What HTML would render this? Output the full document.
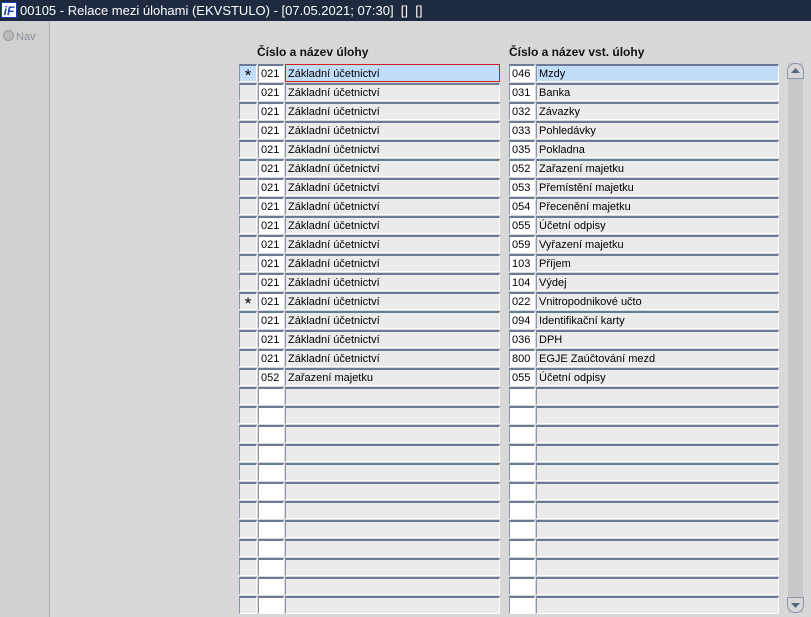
<!DOCTYPE html><html><head><meta charset="utf-8"><style>
body{margin:0;width:811px;height:617px;background:#d8d8d8;font-family:"Liberation Sans",sans-serif;position:relative;overflow:hidden}
#t{position:absolute;left:0;top:0;width:811px;height:21px;background:#1e2a40;color:#fff;font-size:13px;line-height:21px}
#t .lg{position:absolute;left:1px;top:2px;width:16px;height:16px;background:#fff;color:#1a3fb0;font-weight:bold;font-style:italic;font-size:12px;line-height:16px;text-align:center;border:1px solid #1a3fb0;box-sizing:border-box}
#t span.tx{position:absolute;left:20px}
#lp{position:absolute;left:0;top:21px;width:49px;height:596px;background:#d0d0d0;border-right:1px solid #aeb2b8}
#nav{position:absolute;left:3px;top:9px;font-size:11px;color:#8890a0}
#nav i{display:inline-block;width:9px;height:9px;border-radius:50%;background:#bbb;border:1px solid #999;vertical-align:-1px;margin-right:2px}
.h{position:absolute;top:45px;font-size:12px;font-weight:bold;color:#111}
.f{position:absolute;height:18px;box-sizing:border-box;border-top:2px solid #6b7b95;border-left:1px solid #8a97ab;border-right:1px solid #fff;border-bottom:1px solid #fff;background:#ebebeb;font-size:11px;line-height:15px;padding-left:2px;padding-top:1px;color:#000;white-space:nowrap;overflow:hidden}
.w{background:#fff}
.sel{background:#c1ddf9}
.ind{text-align:center;padding:0;font-size:17px;line-height:20px}
#sb{position:absolute;left:788px;top:63px;width:15px;height:550px;background:#c9c9c9}
.ar{position:absolute;left:787px;width:17px;height:16px;background:#d8d8d8;border:1px solid #8a97ab;box-sizing:border-box}
</style></head><body>
<div id="t"><div class="lg">iF</div><span class="tx">00105 - Relace mezi úlohami (EKVSTULO) - [07.05.2021; 07:30] &nbsp;[] &nbsp;[]</span></div>
<div id="lp"><div id="nav"><i></i>Nav</div></div>
<div class="h" style="left:257px">Číslo a název úlohy</div>
<div class="h" style="left:509px">Číslo a název vst. úlohy</div>
<div id="sb"></div>
<div class="ar" style="top:63px;border-radius:8px 8px 0 0"><svg width="15" height="14"><path d="M3 9h9L7.5 4z" fill="#5a6a85"/></svg></div>
<div class="ar" style="top:597px;border-radius:0 0 8px 8px"><svg width="15" height="14"><path d="M3 5h9L7.5 10z" fill="#5a6a85"/></svg></div>
<div id="rows"></div>
<script>
var d=[["*","046","Mzdy"],["","031","Banka"],["","032","Závazky"],["","033","Pohledávky"],["","035","Pokladna"],["","052","Zařazení majetku"],["","053","Přemístění majetku"],["","054","Přecenění majetku"],["","055","Účetní odpisy"],["","059","Vyřazení majetku"],["","103","Příjem"],["","104","Výdej"],["*","022","Vnitropodnikové učto"],["","094","Identifikační karty"],["","036","DPH"],["","800","EGJE Zaúčtování mezd"]];
var h="";
for(var i=0;i<29;i++){var y=64+i*19,r=d[i],a="",b="",c="",e="",g="";
if(r){a=r[0];b="021";c="Základní účetnictví";e=r[1];g=r[2];}
if(i==16){b="052";c="Zařazení majetku";e="055";g="Účetní odpisy";}
var s=i==0?" sel":"";
h+='<div class="f ind'+s+'" style="left:239px;top:'+y+'px;width:18px">'+a+'</div>';
h+='<div class="f w" style="left:258px;top:'+y+'px;width:26px">'+b+'</div>';
h+='<div class="f'+s+'" style="left:285px;top:'+y+'px;width:215px'+(i==0?';border:1px solid #d02020;padding-top:2px':'')+'">'+c+'</div>';
h+='<div class="f w" style="left:509px;top:'+y+'px;width:26px">'+e+'</div>';
h+='<div class="f'+s+'" style="left:536px;top:'+y+'px;width:243px">'+g+'</div>';}
document.getElementById("rows").innerHTML=h;
</script>
</body></html>
